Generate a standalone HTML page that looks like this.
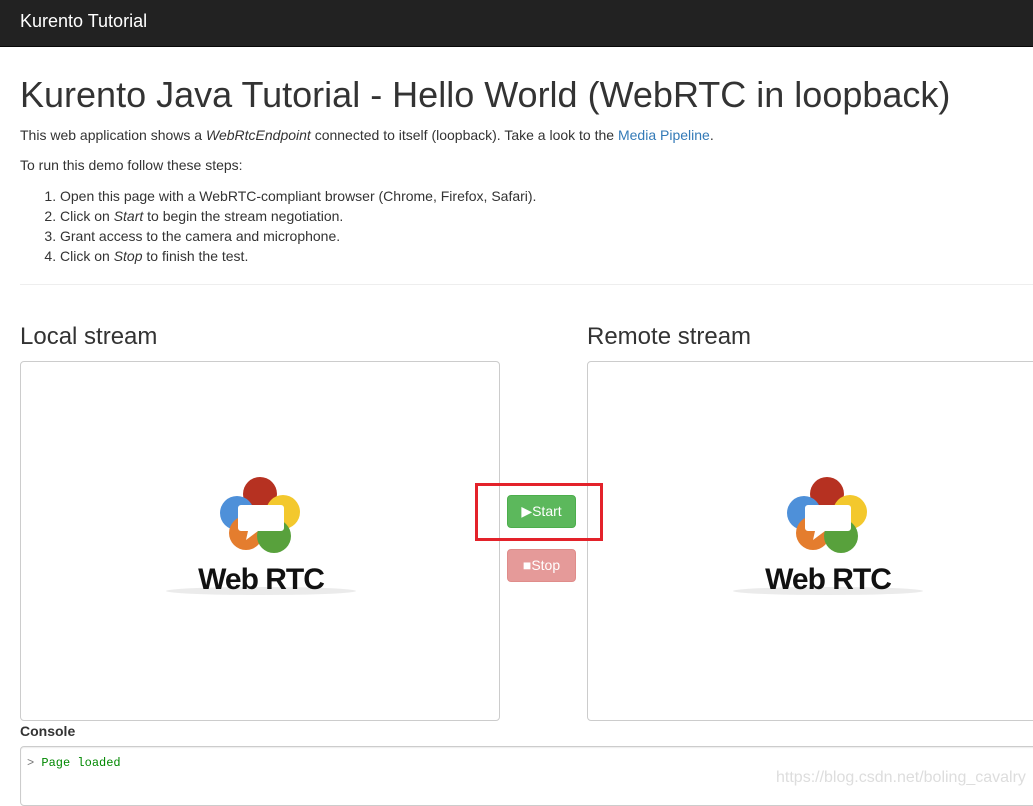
<!DOCTYPE html>
<html><head><meta charset="utf-8"><style>
*{box-sizing:border-box}
body{margin:0;width:1033px;height:797px;overflow:hidden;font-family:"Liberation Sans",Arial,sans-serif;font-size:14px;color:#333;background:#fff;position:relative}
.nav{position:absolute;left:0;top:0;width:1033px;height:47px;background:#222;border-bottom:1px solid #080808}
.nav span{position:absolute;left:20px;top:11px;color:#fff;font-size:18px}
.a{position:absolute;white-space:nowrap}
h1{position:absolute;left:20px;top:74px;margin:0;font-weight:400;font-size:36px;color:#333}
a{color:#337ab7;text-decoration:none}
ol{position:absolute;left:20px;top:186px;margin:0;padding-left:40px;line-height:20px}
.hr{position:absolute;left:20px;top:284px;width:1013px;border-top:1px solid #eee}
.box{position:absolute;top:361px;width:480px;height:360px;border:1px solid #ccc;border-radius:4px;background:#fff}
.btn{position:absolute;left:507px;width:69px;height:33px;border-radius:4px;color:#fff;font-size:14px;text-align:center;line-height:31px}
</style></head><body>
<div class="nav"><span>Kurento Tutorial</span></div>
<h1>Kurento Java Tutorial - Hello World (WebRTC in loopback)</h1>
<div class="a" style="left:20px;top:127px">This web application shows a <i>WebRtcEndpoint</i> connected to itself (loopback). Take a look to the <a>Media Pipeline</a>.</div>
<div class="a" style="left:20px;top:157px">To run this demo follow these steps:</div>
<ol>
<li>Open this page with a WebRTC-compliant browser (Chrome, Firefox, Safari).</li>
<li>Click on <i>Start</i> to begin the stream negotiation.</li>
<li>Grant access to the camera and microphone.</li>
<li>Click on <i>Stop</i> to finish the test.</li>
</ol>
<div class="hr"></div>
<div class="a" style="left:20px;top:323px;font-size:24px">Local stream</div>
<div class="a" style="left:587px;top:323px;font-size:24px">Remote stream</div>
<div class="box" style="left:20px"><svg style="position:absolute;left:140px;top:110px" width="200" height="130" viewBox="0 0 200 130">
<g opacity=".92"><circle cx="99" cy="22" r="17" fill="#b0200f"/><circle cx="76" cy="41" r="17" fill="#3f87d6"/><circle cx="122" cy="40" r="17" fill="#f2c41c"/><circle cx="85" cy="61" r="17" fill="#e2721d"/><circle cx="113" cy="64" r="17" fill="#4a9a2c"/></g>
<path d="M80 33h40a3 3 0 0 1 3 3v20a3 3 0 0 1-3 3h-23l-12 9 2-9h-7a3 3 0 0 1-3-3v-20a3 3 0 0 1 3-3z" fill="#fff"/>
<ellipse cx="100" cy="119" rx="95" ry="4" fill="#ddd" opacity=".6"/>
<text x="100" y="117" text-anchor="middle" font-family="Liberation Sans,sans-serif" font-weight="bold" font-size="30" fill="#111" letter-spacing="-1">Web RTC</text></svg></div>
<div class="box" style="left:587px"><svg style="position:absolute;left:140px;top:110px" width="200" height="130" viewBox="0 0 200 130">
<g opacity=".92"><circle cx="99" cy="22" r="17" fill="#b0200f"/><circle cx="76" cy="41" r="17" fill="#3f87d6"/><circle cx="122" cy="40" r="17" fill="#f2c41c"/><circle cx="85" cy="61" r="17" fill="#e2721d"/><circle cx="113" cy="64" r="17" fill="#4a9a2c"/></g>
<path d="M80 33h40a3 3 0 0 1 3 3v20a3 3 0 0 1-3 3h-23l-12 9 2-9h-7a3 3 0 0 1-3-3v-20a3 3 0 0 1 3-3z" fill="#fff"/>
<ellipse cx="100" cy="119" rx="95" ry="4" fill="#ddd" opacity=".6"/>
<text x="100" y="117" text-anchor="middle" font-family="Liberation Sans,sans-serif" font-weight="bold" font-size="30" fill="#111" letter-spacing="-1">Web RTC</text></svg></div>
<div style="position:absolute;left:475px;top:483px;width:128px;height:58px;border:3px solid #e3222a"></div>
<div class="btn" style="top:495px;background:#5cb85c;border:1px solid #4cae4c">▶Start</div>
<div class="btn" style="top:549px;background:#e59a99;border:1px solid #e08c8a">■Stop</div>
<div class="a" style="left:20px;top:723px;font-weight:bold;font-size:14px">Console</div>
<div style="position:absolute;left:20px;top:746px;width:1030px;height:60px;border:1px solid #ccc;border-radius:4px;box-shadow:inset 0 1px 1px rgba(0,0,0,.075)"></div>
<div class="a" style="left:27px;top:756px;font-family:'Liberation Mono',monospace;font-size:12px;color:#080"><span style="color:#777">&gt;</span> Page loaded</div>
<div class="a" style="left:776px;top:769px;font-size:16px;color:#ddd">https://blog.csdn.net/boling_cavalry</div>
</body></html>
